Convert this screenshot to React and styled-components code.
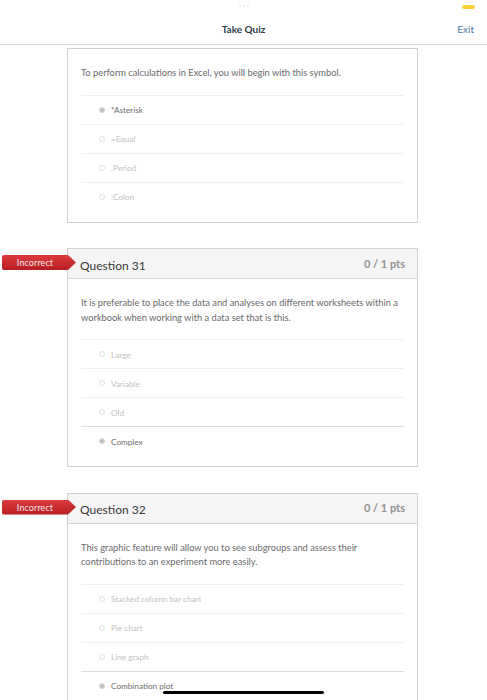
import React from "react";
import styled, { createGlobalStyle } from "styled-components";

const GlobalStyle = createGlobalStyle`
  html, body { margin: 0; padding: 0; background: #fff; }
  body {
    width: 487px;
    height: 700px;
    overflow: hidden;
    font-family: Lato, "Open Sans", "Liberation Sans", sans-serif;
  }
`;

const Page = styled.div`
  position: relative;
  width: 487px;
  height: 700px;
  overflow: hidden;
  background: #fff;
`;

const StatusBar = styled.div`
  height: 14px;
  display: grid;
  grid-template-columns: 1fr auto 1fr;
  align-items: center;
`;

const Dots = styled.div`
  grid-column: 2;
  display: flex;
  gap: 2px;
  margin-top: -2px;
`;

const Dot = styled.span`
  width: 2px;
  height: 2px;
  border-radius: 50%;
  background: #e9e9e9;
`;

const Pill = styled.div`
  grid-column: 3;
  justify-self: end;
  width: 13px;
  height: 4px;
  border-radius: 2px;
  background: #fcd43a;
  margin-right: 12px;
  margin-top: -1px;
`;

const TopBar = styled.header`
  height: 30px;
  display: grid;
  grid-template-columns: 1fr auto 1fr;
  align-items: center;
  border-bottom: 1px solid #dcdcdc;
`;

const Title = styled.div`
  grid-column: 2;
  font-size: 10px;
  font-weight: 700;
  color: #2d3b45;
`;

const Exit = styled.div`
  grid-column: 3;
  justify-self: end;
  margin-right: 13px;
  font-size: 10px;
  color: #4f7aa3;
`;

const Content = styled.main`
  padding: 3px 0 0 67px;
  display: flex;
  flex-direction: column;
  gap: 25.5px;
`;

const Card = styled.section`
  position: relative;
  width: 349px;
  border: 1px solid #d0d0d0;
  background: #fff;
`;

const CardHeader = styled.div`
  height: 29px;
  background: #f5f5f5;
  border-bottom: 1px solid #d6d6d6;
  display: flex;
  justify-content: space-between;
  align-items: center;
  padding: 0 12px;
`;

const QTitle = styled.div`
  font-size: 12px;
  color: #3a3a3a;
  margin-top: 3px;
`;

const Pts = styled.div`
  font-size: 11px;
  font-weight: 700;
  color: #929292;
  margin-top: -1px;
`;

const Badge = styled.div`
  position: absolute;
  left: -66px;
  top: 6px;
  width: 74px;
  height: 15px;
  border-radius: 2px 0 0 2px;
  background: linear-gradient(#dc3b3e, #b51e22);
  clip-path: polygon(0 0, 66px 0, 74px 50%, 66px 100%, 0 100%);
  box-sizing: border-box;
  padding-right: 8px;
  display: flex;
  align-items: center;
  justify-content: center;
  font-size: 8.8px;
  color: #fbeaea;
  letter-spacing: 0.2px;
`;

const Body = styled.div`
  padding: 17px 13px 11px;
`;

const QText = styled.p`
  margin: 0 0 14px;
  font-size: 9.3px;
  line-height: 14.5px;
  color: #6a6a6a;
`;

const Option = styled.div`
  height: 28px;
  border-top: 1px solid ${(p) => (p.$selected ? "#dedede" : "#efefef")};
  display: flex;
  align-items: center;
  gap: 6px;
  padding-left: 18px;
`;

const Radio = styled.span`
  flex: none;
  width: 6px;
  height: 6px;
  border-radius: 50%;
  box-sizing: border-box;
  border: 1px solid ${(p) => (p.$selected ? "#d6d6d6" : "#e2e2e2")};
  background: ${(p) => (p.$selected ? "#9a9a9a" : "#fff")};
  box-shadow: ${(p) => (p.$selected ? "inset 0 0 0 1px #e6e6e6" : "none")};
`;

const OptionText = styled.span`
  font-size: 8.2px;
  margin-top: 1px;
  color: ${(p) => (p.$selected ? "#6e6e6e" : "#c2c2c2")};
`;

const HomeBar = styled.div`
  position: absolute;
  left: 163px;
  top: 691px;
  width: 161px;
  height: 3px;
  border-radius: 2px;
  background: #000;
`;

const questions = [
  {
    id: 30,
    partial: true,
    text: "To perform calculations in Excel, you will begin with this symbol.",
    options: ["*Asterisk", "=Equal", ".Period", ":Colon"],
    selected: 0,
  },
  {
    id: 31,
    text: "It is preferable to place the data and analyses on different worksheets within a workbook when working with a data set that is this.",
    options: ["Large", "Variable", "Old", "Complex"],
    selected: 3,
  },
  {
    id: 32,
    text: "This graphic feature will allow you to see subgroups and assess their contributions to an experiment more easily.",
    options: ["Stacked column bar chart", "Pie chart", "Line graph", "Combination plot"],
    selected: 3,
  },
];

function QuestionCard({ q }) {
  return (
    <Card>
      {!q.partial && (
        <>
          <Badge>Incorrect</Badge>
          <CardHeader>
            <QTitle>Question {q.id}</QTitle>
            <Pts>0 / 1 pts</Pts>
          </CardHeader>
        </>
      )}
      <Body>
        <QText>{q.text}</QText>
        {q.options.map((o, i) => (
          <Option key={o} $selected={i === q.selected && i !== 0}>
            <Radio $selected={i === q.selected} />
            <OptionText $selected={i === q.selected}>{o}</OptionText>
          </Option>
        ))}
      </Body>
    </Card>
  );
}

export default function App() {
  return (
    <Page>
      <GlobalStyle />
      <StatusBar>
        <Dots>
          <Dot />
          <Dot />
          <Dot />
        </Dots>
        <Pill />
      </StatusBar>
      <TopBar>
        <Title>Take Quiz</Title>
        <Exit>Exit</Exit>
      </TopBar>
      <Content>
        {questions.map((q) => (
          <QuestionCard key={q.id} q={q} />
        ))}
      </Content>
      <HomeBar />
    </Page>
  );
}
